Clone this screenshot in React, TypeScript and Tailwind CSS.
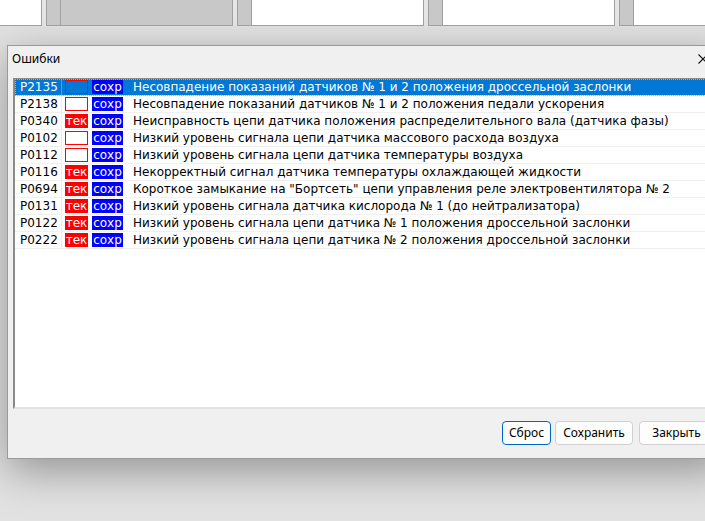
const rows = [
  { code: "P2135", tek: false, text: "Несовпадение показаний датчиков № 1 и 2 положения дроссельной заслонки" },
  { code: "P2138", tek: false, text: "Несовпадение показаний датчиков № 1 и 2 положения педали ускорения" },
  { code: "P0340", tek: true, text: "Неисправность цепи датчика положения распределительного вала (датчика фазы)" },
  { code: "P0102", tek: false, text: "Низкий уровень сигнала цепи датчика массового расхода воздуха" },
  { code: "P0112", tek: false, text: "Низкий уровень сигнала цепи датчика температуры воздуха" },
  { code: "P0116", tek: true, text: "Некорректный сигнал датчика температуры охлаждающей жидкости" },
  { code: "P0694", tek: true, text: "Короткое замыкание на \"Бортсеть\" цепи управления реле электровентилятора № 2" },
  { code: "P0131", tek: true, text: "Низкий уровень сигнала датчика кислорода № 1 (до нейтрализатора)" },
  { code: "P0122", tek: true, text: "Низкий уровень сигнала цепи датчика № 1 положения дроссельной заслонки" },
  { code: "P0222", tek: true, text: "Низкий уровень сигнала цепи датчика № 2 положения дроссельной заслонки" },
];

function Panel({ w, grey }: { w: string; grey?: boolean }) {
  return (
    <div className={`${w} flex border-x border-b border-[#a0a0a0] ${grey ? "bg-[#c8c8c8]" : "bg-white"}`}>
      <div className="w-[14px] bg-[#c8c8c8] border-r border-[#a0a0a0]" />
    </div>
  );
}

export default function App() {
  return (
    <div className="w-[705px] h-[521px] overflow-hidden bg-[#e2e2e2] font-['DejaVu_Sans',sans-serif]">

      {/* top panels */}
      <div className="flex h-[26px] gap-[4px] bg-[#e6e6e6]">
        <div className="w-[42px] bg-white border-r border-b border-[#a0a0a0]" />
        <Panel w="w-[187px]" grey />
        <Panel w="w-[187px]" />
        <Panel w="w-[187px]" />
        <Panel w="flex-1 border-r-0" />
      </div>

      {/* dialog */}
      <div className="ml-[7px] mt-[19px] w-[720px] h-[414px] flex flex-col bg-[#f0f0f0] border border-[#9a9a9a] shadow-[0_12px_40px_rgba(0,0,0,0.35)]">

        <div className="h-[26px] flex items-center pl-[4px] pr-[18px] font-['Noto_Sans',sans-serif] text-[12px] text-black">
          <span>Ошибки</span>
          <svg className="ml-auto" width="10" height="10" viewBox="0 0 10 10">
            <path d="M0.5 0.5 L9.5 9.5 M9.5 0.5 L0.5 9.5" stroke="#111" strokeWidth="1.1" />
          </svg>
        </div>

        <div className="ml-[5px] mt-[6px] h-[331px] bg-white border-l-2 border-t border-b-2 border-l-[#8a8a8a] border-t-[#8a8a8a] border-b-[#e3e3e3] text-[12px]">
          {rows.map((r, i) => {
            const sel = i === 0;
            return (
              <div
                key={r.code}
                className={`flex h-[17px] border-b border-[#f0f0f0] ${sel ? "bg-[#0078d7] text-white outline outline-1 outline-dotted outline-[#f0a040] -outline-offset-1" : "text-black"}`}
              >
                <div className={`w-[47px] pl-[5px] leading-[16px] border-r ${sel ? "border-[#4aa0e6]" : "border-[#ececec]"}`}>
                  {r.code}
                </div>
                <div
                  className={`ml-[3px] mt-[1px] w-[23px] h-[14px] flex items-center justify-center text-white leading-none ${r.tek ? "bg-[#ff0000]" : "border border-[#ff0000]"}`}
                >
                  {r.tek ? "тек" : ""}
                </div>
                <div className="ml-[4px] mt-[1px] w-[31px] h-[14px] flex items-center justify-center bg-[#0000ff] text-white leading-none">
                  сохр
                </div>
                <div className="ml-[10px] leading-[16px] whitespace-nowrap">{r.text}</div>
              </div>
            );
          })}
        </div>

        <div className="mt-[12px] flex justify-end gap-[4px] pr-[12px] font-['Noto_Sans',sans-serif] text-[12px] text-black">
          <button className="w-[49px] h-[24px] rounded-[4px] bg-[#fdfdfd] border border-[#0067c0]">Сброс</button>
          <button className="w-[78px] h-[24px] rounded-[4px] bg-[#fdfdfd] border border-[#d0d0d0]">Сохранить</button>
          <button className="ml-[2px] w-[75px] h-[24px] rounded-[4px] bg-[#fdfdfd] border border-[#d0d0d0]">Закрыть</button>
        </div>
      </div>
    </div>
  );
}
